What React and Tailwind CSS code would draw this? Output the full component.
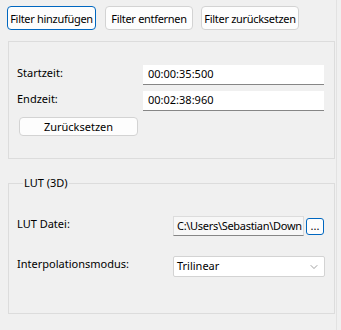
import React from 'react';
import { ChevronDown } from 'lucide-react';

const font = { fontFamily: '"Segoe UI", "Noto Sans", sans-serif' };

const Btn = ({ children, focused, className = '' }) => (
    <button
        className={`h-6 rounded-[4px] border bg-[#fdfdfd] text-[11px] tracking-[-0.3px] leading-none whitespace-nowrap text-black flex items-center justify-center ${focused ? 'border-[#0067c0]' : 'border-[#d3d3d3]'} ${className}`}
    >
        {children}
    </button>
);

const TimeBox = ({ value }) => (
    <div className="h-5 w-[181px] bg-white border-b border-[#868686] flex items-center pl-[5px] text-[11px] text-black">
        {value}
    </div>
);

export default function App() {
    return (
        <div className="w-[341px] h-[330px] bg-[#f0f0f0] flex overflow-hidden text-black" style={font}>
            <div className="w-[336px] flex flex-col">
                {/* toolbar */}
                <div className="flex gap-[8px] pl-[7px] pt-[6px]">
                    <Btn focused className="w-[89px]">Filter hinzufügen</Btn>
                    <Btn className="w-[88px] ml-px">Filter entfernen</Btn>
                    <Btn className="w-[98px]">Filter zurücksetzen</Btn>
                </div>

                {/* time range */}
                <div className="ml-[8px] mt-[11px] w-[327px] h-[118px] border border-[#dcdcdc] pl-[8px] pt-[23px]">
                    <div className="grid grid-cols-[126px_181px] gap-y-[6px] items-center">
                        <span className="text-[11px] -mt-[4px]">Startzeit:</span>
                        <TimeBox value="00:00:35:500" />
                        <span className="text-[11px] -mt-[4px]">Endzeit:</span>
                        <TimeBox value="00:02:38:960" />
                    </div>
                    <button className="mt-[6px] ml-[2px] w-[119px] h-[19px] rounded-[4px] border border-[#d3d3d3] bg-[#fdfdfd] text-[11px] leading-none flex items-center justify-center">
                        Zurücksetzen
                    </button>
                </div>

                {/* LUT */}
                <fieldset className="ml-[8px] mt-[16px] w-[327px] h-[139px] border border-[#dcdcdc] pl-[8px]">
                    <legend className="ml-[6px] px-[1px] text-[11px] leading-[16px]">LUT (3D)</legend>
                    <div className="grid grid-cols-[156px_1fr] gap-y-[20px] items-center mt-[25px]">
                        <span className="text-[11px] -mt-[4px]">LUT Datei:</span>
                        <div className="flex items-center gap-[2px]">
                            <div className="w-[131px] h-5 bg-[#f7f7f7] border border-[#dcdcdc] border-b-[#868686] flex items-center pl-[3px] text-[11px] tracking-[-0.3px] overflow-hidden whitespace-nowrap">
                                C:\Users\Sebastian\Down
                            </div>
                            <button className="w-[18px] h-[17px] rounded-[3px] border border-[#0067c0] bg-[#fdfdfd] text-[11px] leading-none flex items-end justify-center pb-[3px]">
                                ...
                            </button>
                        </div>
                        <span className="text-[11px] -mt-[4px]">Interpolationsmodus:</span>
                        <div className="w-[152px] h-[21px] bg-white border border-[#d3d3d3] rounded-[2px] flex items-center justify-between pl-[3px] pr-[4px] text-[11px]">
                            <span>Trilinear</span>
                            <ChevronDown size={12} strokeWidth={1.2} className="text-[#606060]" />
                        </div>
                    </div>
                </fieldset>
            </div>
            <div className="w-px h-full bg-[#e2e2e2]" />
        </div>
    );
}
